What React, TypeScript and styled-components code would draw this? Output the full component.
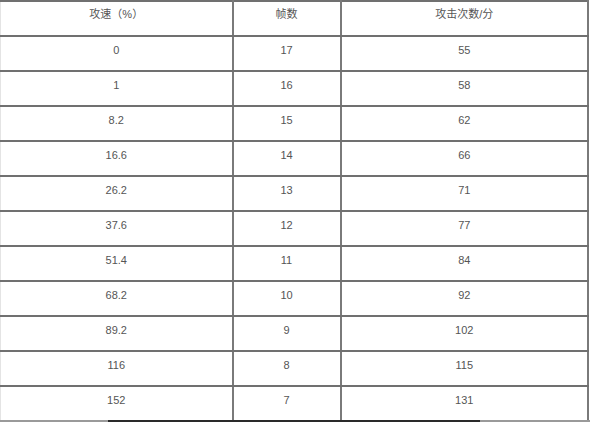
import React from 'react';
import styled, { createGlobalStyle } from 'styled-components';

const GlobalStyle = createGlobalStyle`
  html, body {
    margin: 0;
    padding: 0;
    background: #ffffff;
    overflow: hidden;
  }
`;

const Page = styled.div`
  width: 590px;
  height: 423px;
  display: flex;
  flex-direction: column;
  overflow: hidden;
`;

const Table = styled.table`
  width: 589px;
  border-collapse: collapse;
  table-layout: fixed;
  font-family: 'Liberation Sans', 'Noto Sans CJK SC', sans-serif;
  font-size: 11px;
  color: #555555;
  border-left: 1px solid #e4e4e4;
`;

const Cell = styled.td<{ $head?: boolean }>`
  height: ${(p) => (p.$head ? '28px' : '27px')};
  padding: ${(p) => (p.$head ? '5px 0 0' : '6px 0 0')};
  vertical-align: top;
  text-align: center;
  line-height: 14px;
  color: #555555;
  border-top: 2px solid #707070;
  border-bottom: 2px solid #707070;
  border-right: 2px solid #7a7a7a;
  &:first-child {
    border-left: 1px solid #e4e4e4;
  }
`;

const Bar = styled.div`
  display: flex;
  height: 2px;
  margin-top: -2px;
  background: #9a9a9a;
`;

const Thumb = styled.div`
  margin-left: 108px;
  width: 372px;
  background: #2a2a2a;
`;

const rows: [string, string, string][] = [
  ['0', '17', '55'],
  ['1', '16', '58'],
  ['8.2', '15', '62'],
  ['16.6', '14', '66'],
  ['26.2', '13', '71'],
  ['37.6', '12', '77'],
  ['51.4', '11', '84'],
  ['68.2', '10', '92'],
  ['89.2', '9', '102'],
  ['116', '8', '115'],
  ['152', '7', '131'],
];

export default function App() {
  return (
    <Page>
      <GlobalStyle />
      <Table>
        <colgroup>
          <col style={{ width: 232 }} />
          <col style={{ width: 108 }} />
          <col />
        </colgroup>
        <thead>
          <tr>
            <Cell $head>攻速（%）</Cell>
            <Cell $head>帧数</Cell>
            <Cell $head>攻击次数/分</Cell>
          </tr>
        </thead>
        <tbody>
          {rows.map((r) => (
            <tr key={r[0]}>
              <Cell>{r[0]}</Cell>
              <Cell>{r[1]}</Cell>
              <Cell>{r[2]}</Cell>
            </tr>
          ))}
        </tbody>
      </Table>
      <Bar>
        <Thumb />
      </Bar>
    </Page>
  );
}
